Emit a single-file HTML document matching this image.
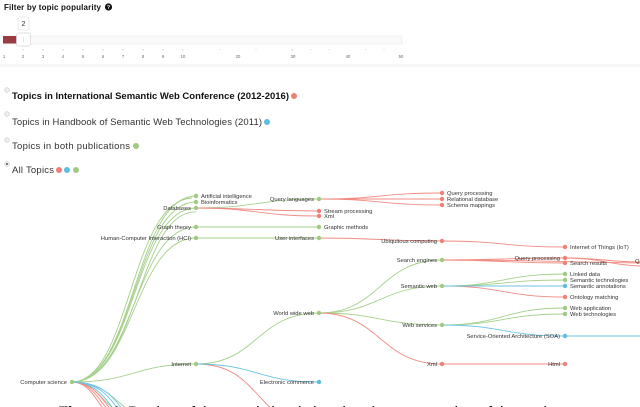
<!DOCTYPE html>
<html><head><meta charset="utf-8"><style>
html,body{margin:0;padding:0;background:#fff;width:640px;height:407px;overflow:hidden}
svg{display:block}
text{font-family:"Liberation Sans",sans-serif}
.l{font-size:5.8px;fill:#333}
.t{font-size:4.2px;fill:#666}
</style></head><body>
<svg width="640" height="407" viewBox="0 0 640 407">
<text x="4" y="10" font-size="8" font-weight="bold" fill="#111" textLength="97">Filter by topic popularity</text>
<circle cx="108.5" cy="7" r="3.6" fill="#111"/><text x="108.5" y="9.2" font-size="5.5" font-weight="bold" fill="#fff" text-anchor="middle">?</text>
<rect x="18" y="17" width="11" height="13" rx="1.5" fill="#fff" stroke="#ddd" stroke-width="0.6"/>
<text x="23.5" y="26" font-size="7" fill="#333" text-anchor="middle">2</text>
<rect x="3" y="36" width="399" height="8" rx="1" fill="#fafafa" stroke="#e6e6e6" stroke-width="0.6"/>
<rect x="3" y="36" width="14" height="7.5" fill="#9b3b42"/>
<rect x="16.5" y="33" width="14" height="13" rx="2" fill="#fff" stroke="#d4d4d4" stroke-width="0.7"/>
<line x1="23.5" y1="37" x2="23.5" y2="42" stroke="#ddd" stroke-width="0.7"/>
<g stroke="#aaa" stroke-width="0.5">
<line x1="23" y1="49" x2="23" y2="51"/><line x1="43" y1="49" x2="43" y2="51"/><line x1="63" y1="49" x2="63" y2="51"/><line x1="83" y1="49" x2="83" y2="51"/><line x1="103" y1="49" x2="103" y2="51"/><line x1="123" y1="49" x2="123" y2="51"/><line x1="143" y1="49" x2="143" y2="51"/><line x1="163" y1="49" x2="163" y2="51"/><line x1="183" y1="49" x2="183" y2="51"/><line x1="220" y1="49" x2="220" y2="50"/><line x1="256" y1="49" x2="256" y2="50"/><line x1="292" y1="49" x2="292" y2="51"/><line x1="311" y1="49" x2="311" y2="50"/><line x1="329" y1="49" x2="329" y2="50"/><line x1="366" y1="49" x2="366" y2="50"/><line x1="384" y1="49" x2="384" y2="50"/>
</g>
<g class="t" text-anchor="middle">
<text x="4" y="58">1</text><text x="23" y="58">2</text><text x="43" y="58">3</text><text x="63" y="58">4</text><text x="83" y="58">5</text><text x="103" y="58">6</text><text x="123" y="58">7</text><text x="143" y="58">8</text><text x="163" y="58">9</text><text x="183" y="58">10</text><text x="238" y="58">20</text><text x="293" y="58">30</text><text x="348" y="58">40</text><text x="401" y="58">50</text>
</g>
<rect x="0" y="64" width="640" height="3" fill="#f7f7f7"/>
<g fill="#eee" stroke="#bbb" stroke-width="0.5">
<circle cx="7" cy="90" r="2.3"/><circle cx="7" cy="114" r="2.3"/><circle cx="7" cy="140" r="2.3"/><circle cx="7" cy="164" r="2.3"/>
</g>
<circle cx="7" cy="164" r="1" fill="#555"/>
<text x="12" y="99" font-size="9.5" font-weight="bold" fill="#111" textLength="277">Topics in International Semantic Web Conference (2012-2016)</text>
<circle cx="294" cy="96" r="3" fill="#f07f75"/>
<text x="12" y="125" font-size="9.5" fill="#333" textLength="250">Topics in Handbook of Semantic Web Technologies (2011)</text>
<circle cx="267" cy="122" r="3" fill="#5bbde0"/>
<text x="12" y="149" font-size="9.5" fill="#333" textLength="118">Topics in both publications</text>
<circle cx="136" cy="146" r="3" fill="#9dcb7f"/>
<text x="12" y="173" font-size="9.5" fill="#333" textLength="42">All Topics</text>
<circle cx="59" cy="170" r="3" fill="#f07f75"/><circle cx="67" cy="170" r="3" fill="#5bbde0"/><circle cx="76" cy="170" r="3" fill="#9dcb7f"/>
<g fill="none" stroke-width="0.9" opacity="0.9">
<g stroke="#9dcb7f">
<path d="M72 382C134 382 134 196 196 196"/><path d="M72 382C134 382 134 202 196 202"/><path d="M72 382C134 382 134 208 196 208"/><path d="M72 382C134 382 134 227 196 227"/><path d="M72 382C134 382 134 238 196 238"/>
<path d="M72 382C130 382 130 200 192 198"/><path d="M72 382C138 382 138 210 196 212"/>
<path d="M72 382C134 382 134 364 196 364"/>
<path d="M196 208C257 208 257 199 319 199"/><path d="M196 227H319"/><path d="M196 238H319"/>
<path d="M196 364C257 364 257 313 319 313"/>
<path d="M319 313C380 313 380 260 442 260"/><path d="M319 313C380 313 380 286 442 286"/><path d="M319 313C380 313 380 325 442 325"/>
<path d="M442 286C503 286 503 274 565 274"/><path d="M442 286C503 286 503 280 565 280"/>
<path d="M442 325C503 325 503 308 565 308"/><path d="M442 325C503 325 503 314 565 314"/>
<path d="M72 382C95 382 100 400 118 412"/><path d="M72 382C100 382 110 395 128 410"/>
</g>
<g stroke="#f07f75">
<path d="M196 208C257 208 257 211 319 211"/><path d="M196 208C257 208 257 216 319 216"/>
<path d="M319 199C380 199 380 193 442 193"/><path d="M319 199H442"/><path d="M319 199C380 199 380 205 442 205"/>
<path d="M319 238C380 238 380 241 442 241"/><path d="M442 241C503 241 503 247 565 247"/>
<path d="M442 260C503 260 503 258 565 258"/><path d="M442 260C503 260 503 263 565 263"/>
<path d="M442 260C540 260 560 262 640 263"/><path d="M565 258C600 258 610 262 640 262"/><path d="M565 258C600 258 610 265 640 266"/>
<path d="M442 286C503 286 503 297 565 297"/>
<path d="M319 313C380 313 380 364 442 364"/><path d="M442 364H565"/>
<path d="M196 364C240 364 250 390 275 412"/>
<path d="M72 382C88 382 95 398 104 410"/><path d="M72 382C90 382 97 397 108 410"/><path d="M72 382C92 382 100 396 111 410"/>
</g>
<g stroke="#5bbde0">
<path d="M196 364C257 364 257 382 319 382"/>
<path d="M442 286H565"/><path d="M442 325C503 325 503 336 565 336"/><path d="M565 336H640"/>
<path d="M72 382C94 382 104 396 114 410"/><path d="M72 382C97 382 108 395 119 410"/><path d="M72 382C100 382 112 395 123 410"/>
</g>
</g>
<g fill="#9dcb7f">
<circle cx="72" cy="382" r="2.2"/><circle cx="196" cy="196" r="2.2"/><circle cx="196" cy="202" r="2.2"/><circle cx="196" cy="208" r="2.2"/><circle cx="196" cy="227" r="2.2"/><circle cx="196" cy="238" r="2.2"/><circle cx="196" cy="364" r="2.2"/>
<circle cx="319" cy="199" r="2.2"/><circle cx="319" cy="227" r="2.2"/><circle cx="319" cy="238" r="2.2"/><circle cx="319" cy="313" r="2.2"/>
<circle cx="442" cy="260" r="2.2"/><circle cx="442" cy="286" r="2.2"/><circle cx="442" cy="325" r="2.2"/>
<circle cx="565" cy="274" r="2.2"/><circle cx="565" cy="280" r="2.2"/><circle cx="565" cy="308" r="2.2"/><circle cx="565" cy="314" r="2.2"/>
</g>
<g fill="#f07f75">
<circle cx="319" cy="211" r="2.2"/><circle cx="319" cy="216" r="2.2"/>
<circle cx="442" cy="193" r="2.2"/><circle cx="442" cy="199" r="2.2"/><circle cx="442" cy="205" r="2.2"/><circle cx="442" cy="241" r="2.2"/><circle cx="442" cy="364" r="2.2"/>
<circle cx="565" cy="247" r="2.2"/><circle cx="565" cy="258" r="2.2"/><circle cx="565" cy="263" r="2.2"/><circle cx="565" cy="297" r="2.2"/><circle cx="565" cy="364" r="2.2"/>
</g>
<g fill="#5bbde0"><circle cx="319" cy="382" r="2.2"/><circle cx="565" cy="286" r="2.2"/><circle cx="565" cy="336" r="2.2"/></g>
<g class="l" text-anchor="end">
<text x="67" y="384">Computer science</text>
<text x="191" y="210">Databases</text><text x="191" y="229">Graph theory</text><text x="191" y="240">Human-Computer Interaction (HCI)</text><text x="191" y="366">Internet</text>
<text x="314" y="201">Query languages</text><text x="314" y="240">User interfaces</text><text x="314" y="315">World wide web</text><text x="314" y="384">Electronic commerce</text>
<text x="437" y="243">Ubiquitous computing</text><text x="437" y="262">Search engines</text><text x="437" y="288">Semantic web</text><text x="437" y="327">Web services</text><text x="437" y="366">Xml</text>
<text x="560" y="260">Query processing</text><text x="560" y="338">Service-Oriented Architecture (SOA)</text><text x="560" y="366">Html</text>
</g>
<g class="l">
<text x="201" y="198">Artificial intelligence</text><text x="201" y="204">Bioinformatics</text>
<text x="324" y="213">Stream processing</text><text x="324" y="218">Xml</text><text x="324" y="229">Graphic methods</text>
<text x="447" y="195">Query processing</text><text x="447" y="201">Relational database</text><text x="447" y="207">Schema mappings</text>
<text x="570" y="249">Internet of Things (IoT)</text><text x="570" y="265">Search results</text>
<text x="570" y="276">Linked data</text><text x="570" y="282">Semantic technologies</text><text x="570" y="288">Semantic annotations</text><text x="570" y="299">Ontology matching</text>
<text x="570" y="310">Web application</text><text x="570" y="316">Web technologies</text>
<text x="635" y="263">Q</text>
</g>
<text x="58" y="418" font-family="Liberation Serif,serif" font-size="17" fill="#111" textLength="505"><tspan font-weight="bold">Figure 4.</tspan> Portion of the word cloud showing the taxonomies of the topics</text>
</svg>
</body></html>
